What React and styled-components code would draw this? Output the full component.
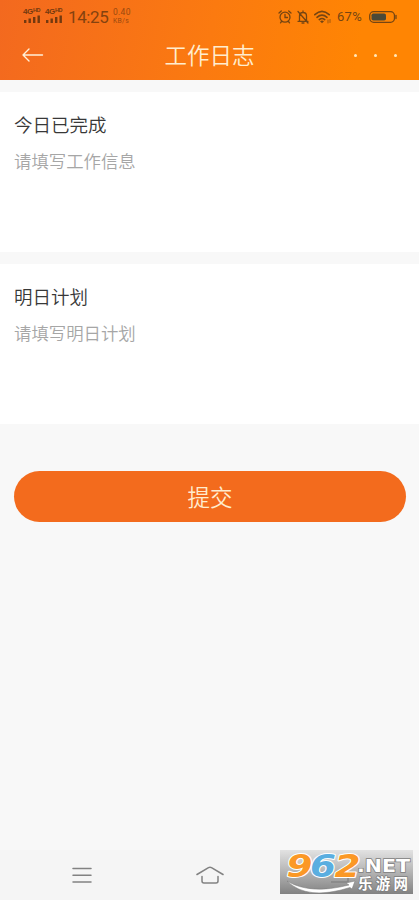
import React from 'react';
import styled, { createGlobalStyle } from 'styled-components';

const GlobalStyle = createGlobalStyle`
  * {
    box-sizing: border-box;
  }

  body {
    margin: 0;
    background: #f8f8f8;
    font-family: 'Noto Sans CJK SC', sans-serif;
  }
`;

const Page = styled.div`
  display: flex;
  flex-direction: column;
  height: 900px;
  overflow: hidden;
  background: #f8f8f8;
`;

const Header = styled.header`
  height: 80px;
  flex-shrink: 0;
  background: linear-gradient(100deg, #f3691f 0%, #fb7a10 50%, #ff8503 85%);
`;

const StatusBar = styled.div`
  display: flex;
  align-items: center;
  height: 32px;
  padding: 2px 22px 0 23px;
  color: #84420f;
  font-family: Roboto, sans-serif;
`;

const Signal = styled.div`
  display: flex;
  flex-direction: column;
  width: 18px;
  margin-right: 4px;
  margin-top: -3px;
  color: #73390f;
`;

const SignalLabel = styled.span`
  display: flex;
  height: 7px;
  font: 700 8px/7px 'Liberation Sans', sans-serif;
  letter-spacing: -0.4px;

  sup {
    font-size: 5.5px;
    line-height: 4px;
  }
`;

const Clock = styled.span`
  margin-left: 1px;
  font-size: 17px;
  line-height: 20px;
  width: 40px;
  letter-spacing: -0.4px;
`;

const Speed = styled.span`
  display: flex;
  flex-direction: column;
  margin-left: 5px;
  margin-top: -1px;
  color: #9a490f;
  font-size: 8.5px;
  letter-spacing: 0.3px;
  line-height: 9px;

  small {
    font-size: 6.8px;
    line-height: 8px;
  }
`;

const StatusIcons = styled.div`
  display: flex;
  align-items: center;
  margin-left: auto;
  margin-top: -1px;
  color: #754512;
`;

const StatusIcon = styled.svg`
  width: ${(props) => props.$width}px;
  height: 16px;
  margin-right: ${(props) => props.$gap || 0}px;
  fill: none;
  stroke: currentColor;
  stroke-width: 1.3;
  stroke-linecap: round;
`;

const Battery = styled.span`
  width: 29px;
  margin-right: 3px;
  font-size: 13px;
  letter-spacing: 0.3px;
  line-height: 16px;
`;

const NavBar = styled.div`
  display: grid;
  grid-template-columns: 68px 1fr 68px;
  align-items: center;
  height: 46px;
`;

const BackIcon = styled.svg`
  width: 22px;
  height: 16px;
  margin-left: 22px;
  fill: none;
  stroke: #fff0d8;
  stroke-width: 1.4;
  stroke-linecap: round;
  stroke-linejoin: round;
`;

const Title = styled.h1`
  margin: -2px 0 0;
  color: #ffedcf;
  font-size: 22.5px;
  font-weight: 350;
  line-height: 32px;
  text-align: center;
`;

const More = styled.div`
  display: flex;
  gap: 17px;
  padding-left: 3px;
  padding-top: 1px;
`;

const Dot = styled.i`
  width: 3px;
  height: 3px;
  border-radius: 50%;
  background: #ffe9bd;
`;

const Form = styled.main`
  display: flex;
  flex-direction: column;
  gap: 12px;
  flex: 1;
  padding-top: 12px;
`;

const Card = styled.section`
  height: 160px;
  padding: 18px 14px;
  background: #fff;
`;

const CardTitle = styled.h2`
  margin: 0;
  color: #383838;
  font-size: 18.5px;
  font-weight: 350;
  line-height: 28px;
`;

const Placeholder = styled.p`
  margin: 10px 0 0;
  color: #a6a6a6;
  font-size: 17.4px;
  font-weight: 350;
  line-height: 26px;
`;

const SubmitButton = styled.button`
  height: 51px;
  margin: 35px 13px 0 14px;
  padding: 0 0 2px;
  border: 0;
  border-radius: 26px;
  background: #f36b1d;
  color: #ffeccf;
  font-family: inherit;
  font-size: 22.5px;
  font-weight: 350;
  line-height: 32px;
`;

const SystemBar = styled.footer`
  position: relative;
  display: flex;
  align-items: center;
  height: 50px;
  padding: 0 0 0 71px;
  background: #f5f5f5;
`;

const SystemIcon = styled.svg`
  width: ${(props) => props.$width}px;
  height: 20px;
  margin-right: ${(props) => props.$gap || 0}px;
  fill: none;
  stroke: #828282;
  stroke-width: 1.5;
  stroke-linecap: round;
  stroke-linejoin: round;
`;

const Watermark = styled.svg`
  position: absolute;
  right: 6px;
  bottom: 6px;
  width: 133px;
  height: 44px;
  overflow: visible;
`;

const sections = [
  { title: '今日已完成', placeholder: '请填写工作信息' },
  { title: '明日计划', placeholder: '请填写明日计划' },
];

const digits = [
  { char: '9', x: 6.5, color: '#fb9826' },
  { char: '6', x: 30, color: '#5aaee0' },
  { char: '2', x: 54.5, color: '#fb9826' },
];

const SignalBars = () => (
  <Signal>
    <SignalLabel>
      4G<sup>HD</sup>
    </SignalLabel>
    <svg width="18" height="8" fill="currentColor">
      <path d="M1 5h2.4v3H1zM5.5 3.5h2.4V8H5.5zM10 2h2.4v6H10zM14.5 .5h2.4V8h-2.4z" />
    </svg>
  </Signal>
);

const SiteLogo = () => (
  <Watermark viewBox="0 0 133 44">
    <defs>
      <linearGradient id="plate" x1="0" y1="0" x2="0" y2="1">
        <stop offset="0" stopColor="#e2e2e2" />
        <stop offset="0.5" stopColor="#b4b4b4" />
        <stop offset="1" stopColor="#828282" />
      </linearGradient>
    </defs>
    <rect width="133" height="44" fill="url(#plate)" />
    <path d="M51 32h17v-9" fill="none" stroke="#858585" strokeWidth="1.5" />
    <g
      fontFamily="DejaVu Sans, sans-serif"
      fontWeight="700"
      fontStyle="italic"
      fontSize="31.5"
      stroke="#fff"
      strokeWidth="2"
      paintOrder="stroke"
      strokeLinejoin="round"
    >
      {digits.map((digit) => (
        <text
          key={digit.char}
          x={digit.x}
          y="27"
          fill={digit.color}
          textLength="26"
          lengthAdjust="spacingAndGlyphs"
        >
          {digit.char}
        </text>
      ))}
    </g>
    <path
      d="M7 31Q30 45 69 35L66 33L75 31L72 39L70 37.5Q27 51 7 31Z"
      fill="#fff"
      stroke="#777"
      strokeWidth="0.5"
    />
    <g fill="#fff" stroke="#7d7d7d" strokeWidth="1.4" paintOrder="stroke" fontWeight="700">
      <text
        x="77"
        y="22"
        fontFamily="DejaVu Sans, sans-serif"
        fontSize="18"
        textLength="53"
        lengthAdjust="spacingAndGlyphs"
      >
        .NET
      </text>
      <text x="78" y="39" fontFamily="Noto Sans CJK SC, sans-serif" fontSize="14.5" textLength="50">
        乐游网
      </text>
    </g>
  </Watermark>
);

const App = () => {
  return (
    <>
      <GlobalStyle />
      <Page>
        <Header>
          <StatusBar>
            <SignalBars />
            <SignalBars />
            <Clock>14:25</Clock>
            <Speed>
              0.40
              <small>KB/s</small>
            </Speed>
            <StatusIcons>
              {/* alarm */}
              <StatusIcon $width={14} $gap={5} viewBox="0 0 14 16">
                <circle cx="7" cy="8.2" r="5" />
                <path d="M7 5.5v3h2.5M1 4l2.3-2M13 4l-2.3-2M3.5 12.5l-1 1.3M10.5 12.5l1 1.3" />
              </StatusIcon>
              {/* muted bell */}
              <StatusIcon $width={12} $gap={5} viewBox="0 0 12 16">
                <path d="M2.5 12V7Q2.5 3.5 6 3.5T9.5 7v5M1 12.3h10M6 2v1.3M5 14h2M1 2.5l10 11.5" />
              </StatusIcon>
              {/* wifi */}
              <StatusIcon $width={17} $gap={6} viewBox="0 0 17 16">
                <path d="M.8 5.7Q8 -1 15.2 5.7M3 8.3Q8 3.8 13 8.3M5.3 10.6Q8 8.4 10.7 10.6" strokeWidth="1.6" />
                <path d="M8 14.2l-2-2q2-1.3 4 0z" fill="currentColor" stroke="none" />
                <path d="M14 11v3M16 10.5v3" strokeWidth="0.7" />
              </StatusIcon>
              <Battery>67%</Battery>
              <StatusIcon $width={28} viewBox="0 0 28 16">
                <rect x="0.7" y="2.7" width="24.8" height="10.6" rx="4" />
                <rect x="2.5" y="4.5" width="14.5" height="7" rx="1.8" fill="#4b4938" stroke="none" />
                <path d="M27 6.5v3" />
              </StatusIcon>
            </StatusIcons>
          </StatusBar>
          <NavBar>
            <BackIcon viewBox="0 0 22 16">
              <path d="M20.5 8H1M7 2L1 8l6 6" />
            </BackIcon>
            <Title>工作日志</Title>
            <More>
              <Dot />
              <Dot />
              <Dot />
            </More>
          </NavBar>
        </Header>
        <Form>
          {sections.map((section) => (
            <Card key={section.title}>
              <CardTitle>{section.title}</CardTitle>
              <Placeholder>{section.placeholder}</Placeholder>
            </Card>
          ))}
          <SubmitButton>提交</SubmitButton>
        </Form>
        <SystemBar>
          <SystemIcon $width={22} $gap={103} viewBox="0 0 22 20">
            <path d="M2 3.5h18M2 10.2h18M2 17h18" />
          </SystemIcon>
          <SystemIcon $width={28} viewBox="0 0 28 20">
            <path d="M1 9.5L12.5 2.6q1.5-.8 3 0L27 9.5M6 11.5v4.5q0 2 2 2h12q2 0 2-2v-4.5" />
          </SystemIcon>
          <SiteLogo />
        </SystemBar>
      </Page>
    </>
  );
};

export default App;
